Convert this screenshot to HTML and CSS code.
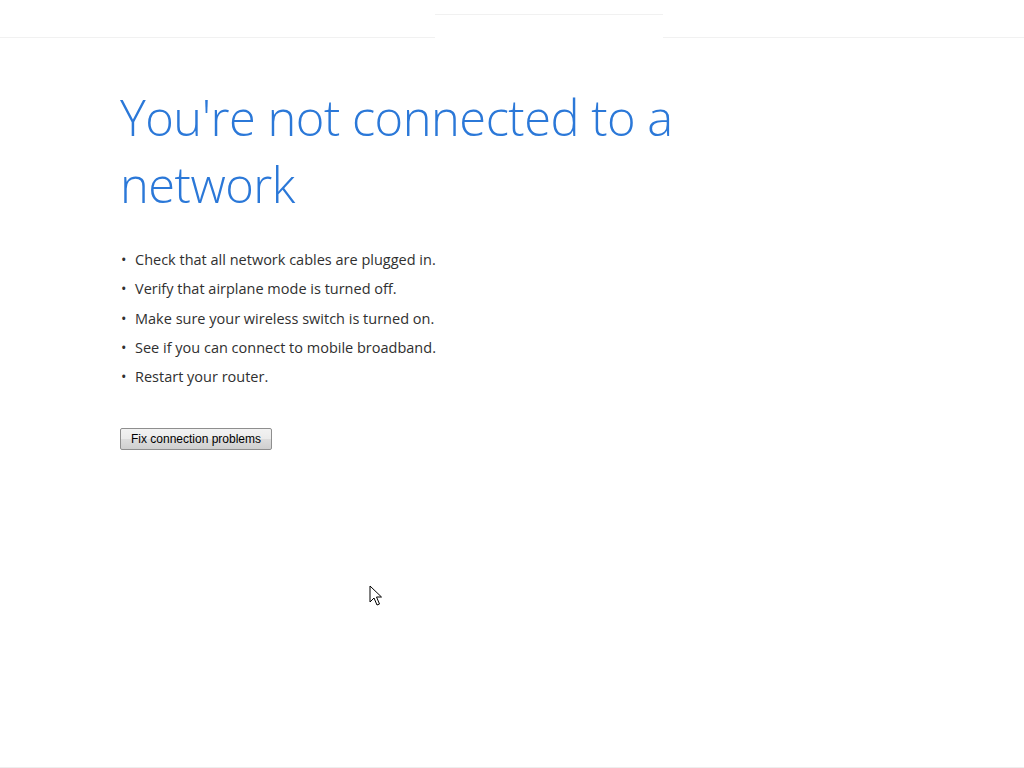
FILE: index.html
```html
<!DOCTYPE html>
<html>
<head>
<meta charset="utf-8">
<link rel="stylesheet" href="styles.css">
</head>
<body>
<div class="chrome">
  <div class="chrome-left"></div>
  <div class="chrome-tab"></div>
  <div class="chrome-right"></div>
</div>
<main class="page">
  <h1 class="title">You're not connected to a network</h1>
  <ul class="tips">
    <li>Check that all network cables are plugged in.</li>
    <li>Verify that airplane mode is turned off.</li>
    <li>Make sure your wireless switch is turned on.</li>
    <li>See if you can connect to mobile broadband.</li>
    <li>Restart your router.</li>
  </ul>
  <button class="fix">Fix connection problems</button>
</main>
<svg class="cursor" width="14" height="22" viewBox="0 0 14 22">
  <path d="M1 1 L1 17 L5 13 L8 20 L10.5 19 L7.5 12 L12.5 12 Z" fill="#fff" stroke="#000" stroke-width="1" stroke-linejoin="miter"/>
</svg>
<div class="bottom-line"></div>
</body>
</html>
```
FILE: styles.css
```css
html, body {
  margin: 0;
  padding: 0;
  background: #fff;
  width: 1024px;
  height: 768px;
  overflow: hidden;
}
body {
  position: relative;
  font-family: "Open Sans", "Noto Sans", sans-serif;
}
.chrome {
  display: flex;
  height: 38px;
}
.chrome-left, .chrome-right {
  border-bottom: 1px solid #f1f1f1;
  height: 37px;
}
.chrome-left { width: 435px; }
.chrome-right { flex: 1; }
.chrome-tab {
  width: 228px;
  margin-top: 14px;
  border-top: 1px solid #f1f1f1;
}
.page {
  padding: 46px 0 0 120px;
}
.title {
  margin: 0;
  width: 600px;
  font-family: "Open Sans", sans-serif;
  font-weight: 300;
  font-size: 48.8px;
  line-height: 67px;
  color: #2b78d8;
  letter-spacing: -0.5px;
}
.tips {
  list-style: none;
  margin: 27px 0 0 0;
  padding: 0;
  font-family: "Open Sans", sans-serif;
  font-size: 14.5px;
  color: #303030;
}
.tips li {
  line-height: 29.3px;
  padding-left: 15px;
  position: relative;
}
.tips li::before {
  content: "•";
  position: absolute;
  left: 1px;
  top: 0;
}
.fix {
  margin-top: 37px;
  width: 152px;
  height: 22px;
  padding: 0;
  font-family: "Liberation Sans", Arial, sans-serif;
  font-size: 12px;
  color: #000;
  border: 1px solid #8e8e8e;
  border-radius: 2px;
  background: linear-gradient(#f2f2f2, #ebebeb 50%, #dddddd 50%, #cfcfcf);
}
.cursor {
  position: absolute;
  left: 369px;
  top: 585px;
}
.bottom-line {
  position: absolute;
  left: 0;
  right: 0;
  bottom: 0;
  height: 1px;
  background: #eeeeee;
}
```
